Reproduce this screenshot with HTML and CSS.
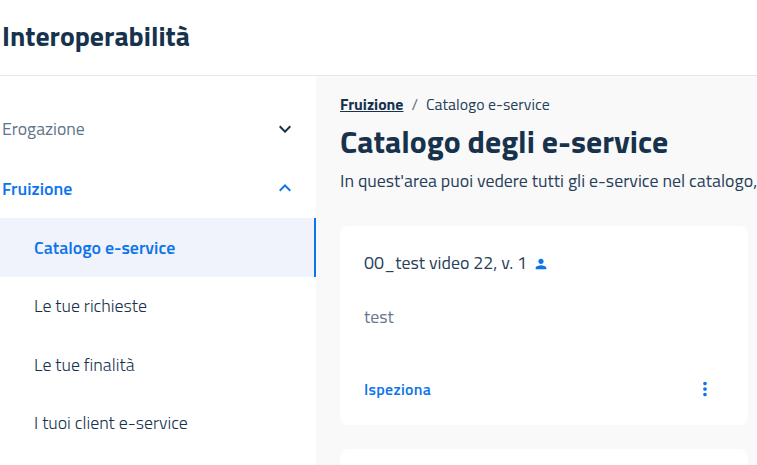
FILE: index.html
```html
<!DOCTYPE html>
<html lang="it">
<head>
<meta charset="utf-8">
<title>Interoperabilità</title>
<link rel="stylesheet" href="styles.css">
</head>
<body>
<header class="header"><span class="brand">Interoperabilità</span></header>
<div class="layout">
  <nav class="sidebar">
    <a class="group erogazione"><span>Erogazione</span>
      <svg class="chevron" viewBox="0 0 24 24"><path d="M7.41 8.59 12 13.17l4.59-4.58L18 10l-6 6-6-6z"/></svg></a>
    <a class="group open"><span>Fruizione</span>
      <svg class="chevron" viewBox="0 0 24 24"><path d="M7.41 15.41 12 10.83l4.59 4.58L18 14l-6-6-6 6z"/></svg></a>
    <a class="item active">Catalogo e-service</a>
    <a class="item">Le tue richieste</a>
    <a class="item">Le tue finalità</a>
    <a class="item">I tuoi client e-service</a>
  </nav>
  <main class="main">
    <div class="breadcrumb"><a class="parent">Fruizione</a><span class="slash">/</span><span class="current">Catalogo e-service</span></div>
    <h1 class="title">Catalogo degli e-service</h1>
    <p class="lead">In quest'area puoi vedere tutti gli e-service nel catalogo,</p>
    <article class="card">
      <div class="card-title"><span>00_test video 22, v. 1</span>
        <svg class="person" viewBox="0 0 24 24"><path d="M12 12c2.210 0 4-1.790 4-4s-1.790-4-4-4-4 1.790-4 4 1.790 4 4 4zm0 2c-2.670 0-8 1.340-8 4v2h16v-2c0-2.660-5.330-4-8-4z"/></svg></div>
      <p class="description">test</p>
      <div class="actions"><a class="inspect">Ispeziona</a>
        <svg class="more" viewBox="0 0 24 24"><path d="M12 8c1.100 0 2-.9 2-2s-.9-2-2-2-2 .9-2 2 .9 2 2 2zm0 2c-1.100 0-2 .9-2 2s.9 2 2 2 2-.9 2-2-.9-2-2-2zm0 6c-1.100 0-2 .9-2 2s.9 2 2 2 2-.9 2-2-.9-2-2-2z"/></svg></div>
    </article>
    <article class="card"></article>
  </main>
</div>
</body>
</html>
```
FILE: styles.css
```css
* { box-sizing: border-box; }
body {
  margin: 0;
  height: 465px;
  overflow: hidden;
  background: #fff;
  color: #17324d;
  font-family: "Titillium Web", Roboto, sans-serif;
  font-size: 17.85px;
}
svg { display: block; flex: none; fill: currentColor; }
p, h1 { margin: 0; white-space: nowrap; }
.header { height: 76px; padding: 20px 2px 0; border-bottom: 1px solid #e6e7e9; }
.brand { display: block; font-size: 27.8px; line-height: 32px; font-weight: 700; }
.layout { display: flex; height: 389px; }
.sidebar { width: 316px; flex: none; padding-top: 23px; }
.group { display: flex; align-items: center; justify-content: space-between; height: 60px; padding: 0 19.5px 0 2px; }
.group span { padding-bottom: 2px; }
.erogazione { color: #62748a; font-size: 17.7px; }
.erogazione .chevron { color: #17324d; }
.open { color: #0b75ec; font-weight: 600; }
.chevron { width: 24px; height: 24px; }
.open .chevron { margin-top: -2px; }
.item { display: flex; align-items: center; height: 58.5px; padding-left: 34px; font-weight: 300; }
.active { margin-top: -1px; background: #f0f3fc; border-right: 2px solid #0b75ec; color: #0b75ec; font-weight: 600; }
.main { flex: 1; min-width: 0; padding: 18px 9px 0 24px; background: #f9f9f9; overflow: hidden; }
.breadcrumb { display: flex; height: 20px; line-height: 20px; font-size: 15.85px; }
.parent { font-weight: 700; text-decoration: underline; }
.slash { margin: 0 8px; color: #5c6f82; }
.current, .lead, .card-title span { color: #273f59; }
.title { height: 46px; font-size: 31.75px; line-height: 54px; font-weight: 700; }
.lead { height: 66px; line-height: 42px; }
.card { height: 199px; margin-bottom: 24px; padding: 24px; background: #fff; border-radius: 8px; }
.card-title { display: flex; align-items: center; gap: 6px; height: 28px; }
.card-title span { padding-bottom: 3px; }
.person { width: 16px; height: 16px; color: #0b75ec; }
.description { margin-top: 25px; line-height: 28px; color: #66788b; }
.actions { display: flex; align-items: center; justify-content: space-between; margin-top: 44px; height: 28px; padding-right: 8px; color: #0b75ec; }
.inspect { font-size: 15.85px; font-weight: 600; letter-spacing: .3px; }
.more { width: 22px; height: 22px; }
```
